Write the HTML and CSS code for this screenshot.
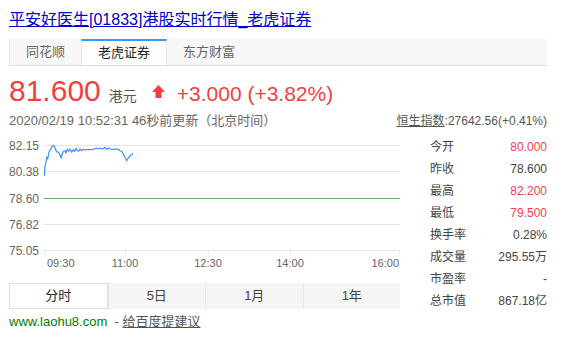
FILE: index.html
```html
<!DOCTYPE html>
<html lang="zh-CN">
<head>
  <meta charset="UTF-8">
  <meta name="viewport" content="width=device-width, initial-scale=1.0">
  <title>平安好医生[01833]港股实时行情_老虎证券</title>
  <link rel="stylesheet" href="styles.css">
</head>
<body>
  <div class="page">
    <a class="title" href="#">平安好医生[01833]港股实时行情_老虎证券</a>

    <div class="tabs">
      <span class="tab">同花顺</span>
      <span class="tab tab-on">老虎证券</span>
      <span class="tab">东方财富</span>
    </div>

    <div class="quote">
      <span class="price">81.600</span><span class="unit">港元</span><svg class="arrow" width="13" height="13" viewBox="0 0 13 13"><polygon points="6.5,0 13,7 9.5,7 9.5,13 3.5,13 3.5,7 0,7" fill="#f23f3f"/></svg><span class="change">+3.000 (+3.82%)</span>
    </div>

    <div class="update">
      <span>2020/02/19 10:52:31 46秒前更新（北京时间）</span>
      <span class="hsi"><a href="#">恒生指数</a>:27642.56(+0.41%)</span>
    </div>

    <div class="main">
      <div class="left">
        <svg class="chart" width="391" height="141" viewBox="0 0 391 141">
          <g stroke="#e6e6e6" stroke-width="1">
            <line x1="35" y1="9.5" x2="391" y2="9.5"/>
            <line x1="35" y1="35.5" x2="391" y2="35.5"/>
            <line x1="35" y1="88.5" x2="391" y2="88.5"/>
            <line x1="35" y1="114.5" x2="391" y2="114.5"/>
            <line x1="35.5" y1="114" x2="35.5" y2="119"/>
            <line x1="116.5" y1="114" x2="116.5" y2="119"/>
            <line x1="199.5" y1="114" x2="199.5" y2="119"/>
            <line x1="281.5" y1="114" x2="281.5" y2="119"/>
            <line x1="390.5" y1="114" x2="390.5" y2="119"/>
          </g>
          <line x1="35" y1="62.5" x2="391" y2="62.5" stroke="#6aaa6a" stroke-width="1"/>
          <g class="axis">
            <text class="price-label" x="0" y="14">82.15</text>
            <text class="price-label" x="0" y="40">80.38</text>
            <text class="price-label" x="0" y="67">78.60</text>
            <text class="price-label" x="0" y="93">76.82</text>
            <text class="price-label" x="0" y="119">75.05</text>
            <text x="38" y="131">09:30</text>
            <text x="116" y="131" text-anchor="middle">11:00</text>
            <text x="199" y="131" text-anchor="middle">12:30</text>
            <text x="281" y="131" text-anchor="middle">14:00</text>
            <text x="390" y="131" text-anchor="end">16:00</text>
          </g>
          <polyline fill="none" stroke="#3b8cff" stroke-width="1.2" stroke-linejoin="round" points="35.3,39.7 36,31 37,26 37.7,21 38.7,23 40,16 41.7,13 43.3,10 45,9.7 46,12 47.7,16 49.3,16 51,18.7 52,22 53.3,18 54.3,15.3 56,14.7 57,17 58.3,13 59.7,15.3 61,13 62.7,16.3 64.3,13.7 65.7,15.3 67,12.3 68.3,14.7 69.7,15.3 71,13 72.7,14.7 74.3,13.3 76,14 77.7,13.7 81,13.7 84.3,13.3 87.7,12 89.3,12.7 91,12 92.7,13 94.3,12.7 96,11.3 97.7,13.3 99.3,12 101,13 104.3,13.3 107.7,13 109.3,13.3 111,14.7 112.7,15.3 114.3,18 116,21.3 117.7,24.7 118.7,23 120.3,20.7 121.7,19 123,18.7 124,17.3"/>
        </svg>

        <div class="periods">
          <span class="period period-on">分时</span>
          <span class="period">5日</span>
          <span class="period">1月</span>
          <span class="period">1年</span>
        </div>

        <p class="footer"><span class="site">www.laohu8.com</span>&nbsp; - <a href="#">给百度提建议</a></p>
      </div>

      <div class="stats">
        <div class="row"><span>今开</span><span class="up">80.000</span></div>
        <div class="row"><span>昨收</span><span>78.600</span></div>
        <div class="row"><span>最高</span><span class="up">82.200</span></div>
        <div class="row"><span>最低</span><span class="up">79.500</span></div>
        <div class="row"><span>换手率</span><span>0.28%</span></div>
        <div class="row"><span>成交量</span><span>295.55万</span></div>
        <div class="row"><span>市盈率</span><span>-</span></div>
        <div class="row"><span>总市值</span><span>867.18亿</span></div>
      </div>
    </div>
  </div>
</body>
</html>
```

FILE: styles.css
```css
body{
  margin: 0;
  background-color: white;
  color: #333;
  font-family: "Liberation Sans", Arial, "Noto Sans CJK SC", sans-serif;
}

.page{
  width: 538px;
  padding: 9px 0 0 9px;
}

.title{
  display: block;
  height: 22px;
  font-size: 16px;
  line-height: 22px;
  color: #0000cc;
}

.tabs{
  display: flex;
  height: 26px;
  margin-top: 8px;
  background-color: #f8f8f8;
  border-left: 1px solid #e6e6e6;
  border-bottom: 1px solid #dddddd;
}
.tab{
  padding: 0 16px;
  font-size: 13px;
  line-height: 26px;
  color: #666;
}
.tab-on{
  background-color: white;
  color: #222;
  border-top: 2px solid #3399ff;
  border-right: 1px solid #e6e6e6;
  border-left: 1px solid #e6e6e6;
  line-height: 24px;
}

.quote{
  height: 36px;
  margin-top: 7px;
  line-height: 36px;
  white-space: nowrap;
  color: #f23f3f;
}
.price{
  font-size: 30px;
}
.unit{
  margin-left: 8px;
  font-size: 14px;
  color: #555;
}
.arrow{
  margin-left: 15px;
  vertical-align: 3px;
}
.change{
  margin-left: 12px;
  font-size: 21px;
}

.update{
  display: flex;
  justify-content: space-between;
  height: 18px;
  margin-top: 3px;
  font-size: 13px;
  line-height: 18px;
  color: #666;
}
.hsi{
  font-size: 12px;
  color: #555;
}
.hsi a{
  color: #555;
}

.main{
  display: flex;
  margin-top: 6px;
}
.left{
  width: 391px;
}
.chart{
  display: block;
}
.axis text{
  font-family: "Liberation Sans", Arial, sans-serif;
  font-size: 11px;
  fill: #666;
}
.axis .price-label{
  font-size: 12px;
}

.periods{
  display: flex;
  height: 26px;
  margin-top: 6px;
  background-color: #f5f5f5;
}
.period{
  flex: 1;
  text-align: center;
  font-size: 13px;
  line-height: 26px;
  color: #444;
  border-left: 1px solid #e8e8e8;
}
.period-on{
  background-color: white;
  border: 1px solid #dddddd;
  line-height: 24px;
  color: #222;
}

.footer{
  margin: 4px 0 0 0;
  font-size: 13px;
  line-height: 18px;
  color: #555;
}
.site{
  color: #008000;
}
.footer a{
  color: #555;
}

.stats{
  width: 117px;
  margin-left: 30px;
  font-size: 12px;
  color: #444;
}
.row{
  display: flex;
  justify-content: space-between;
  height: 22px;
  line-height: 22px;
}
.up{
  color: #f23f4a;
}
```
